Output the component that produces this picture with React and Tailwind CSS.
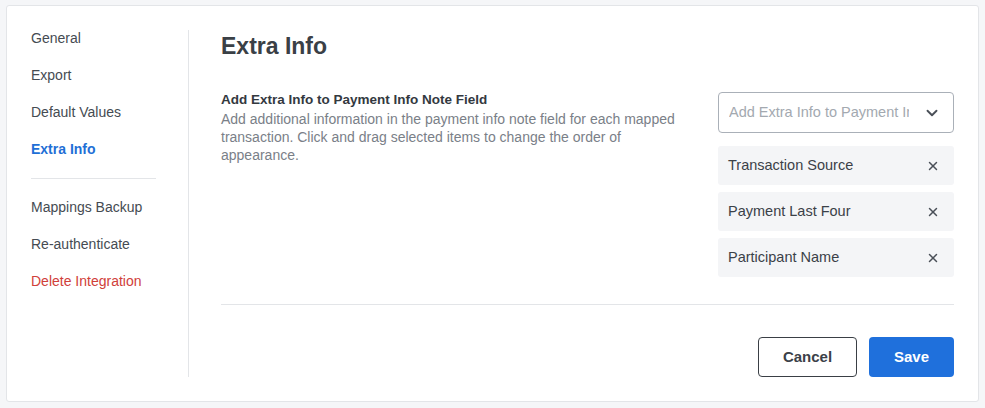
import React from 'react';
import { ChevronDown, X } from 'lucide-react';

const navTop = ['General', 'Export', 'Default Values'];
const navBottom = ['Mappings Backup', 'Re-authenticate'];
const selected = ['Transaction Source', 'Payment Last Four', 'Participant Name'];

const App = () => {
  return (
    <div
      className="min-h-screen bg-[#f5f6f8] pt-[5px] px-[6px]"
      style={{ fontFamily: '"Liberation Sans", Arial, sans-serif' }}
    >
      <div className="w-[973px] bg-white border border-[#e3e5e8] rounded-[3px] p-6 flex">
        {/* Sidebar */}
        <div className="w-[158px] shrink-0 pr-8 border-r border-[#e3e5e8] flex flex-col text-sm text-[#454b52]">
          {navTop.map((item) => (
            <div key={item} className="h-[17px] leading-[17px] mb-5">{item}</div>
          ))}
          <div className="h-[17px] leading-[17px] mb-5 font-bold text-[#1f6fd6]">Extra Info</div>
          <div className="h-px bg-[#e3e5e8] mb-5" />
          {navBottom.map((item) => (
            <div key={item} className="h-[17px] leading-[17px] mb-5">{item}</div>
          ))}
          <div className="h-[17px] leading-[17px] text-[#d0403a]">Delete Integration</div>
        </div>

        {/* Main */}
        <div className="flex-1 pl-8 flex flex-col">
          <h1 className="text-[23px] leading-8 font-bold text-[#3a4046]">Extra Info</h1>

          <div className="flex justify-between mt-7">
            <div className="w-[478px] leading-[18px] pt-px">
              <div className="text-[13.5px] font-bold text-[#33393f] mb-px">Add Extra Info to Payment Info Note Field</div>
              <div className="text-[14px] text-[#7a8088]">
                Add additional information in the payment info note field for each mapped transaction. Click and drag selected items to change the order of appearance.
              </div>
            </div>

            <div className="w-[236px] mt-[2px] flex flex-col">
              <div className="h-[41px] border border-[#aab0b8] rounded-[4px] flex items-center pl-[10px] pr-[12px]">
                <span className="flex-1 overflow-hidden whitespace-nowrap text-[14.5px] text-[#a3a9b0]">
                  Add Extra Info to Payment In
                </span>
                <ChevronDown size={18} strokeWidth={2.5} className="text-[#4a5058] ml-[14px] shrink-0" />
              </div>
              <div className="flex flex-col gap-[7px] mt-[13px]">
                {selected.map((s) => (
                  <div key={s} className="h-[39px] bg-[#f4f5f7] rounded-[3px] flex items-center justify-between pl-[10px] pr-[14px] text-[14.5px] text-[#3b4148]">
                    <span>{s}</span>
                    <X size={14} strokeWidth={2.5} className="text-[#4a5058]" />
                  </div>
                ))}
              </div>
            </div>
          </div>

          <div className="h-px bg-[#e3e5e8] mt-[27px]" />

          <div className="flex justify-end gap-3 mt-8">
            <button className="w-[99px] h-10 border border-[#3a3f45] rounded-[4px] text-[15px] font-bold text-[#3b4148]">
              Cancel
            </button>
            <button className="w-[85px] h-10 bg-[#1f70dc] rounded-[4px] text-[15px] font-bold text-white">
              Save
            </button>
          </div>
        </div>
      </div>
    </div>
  );
};

export default App;
